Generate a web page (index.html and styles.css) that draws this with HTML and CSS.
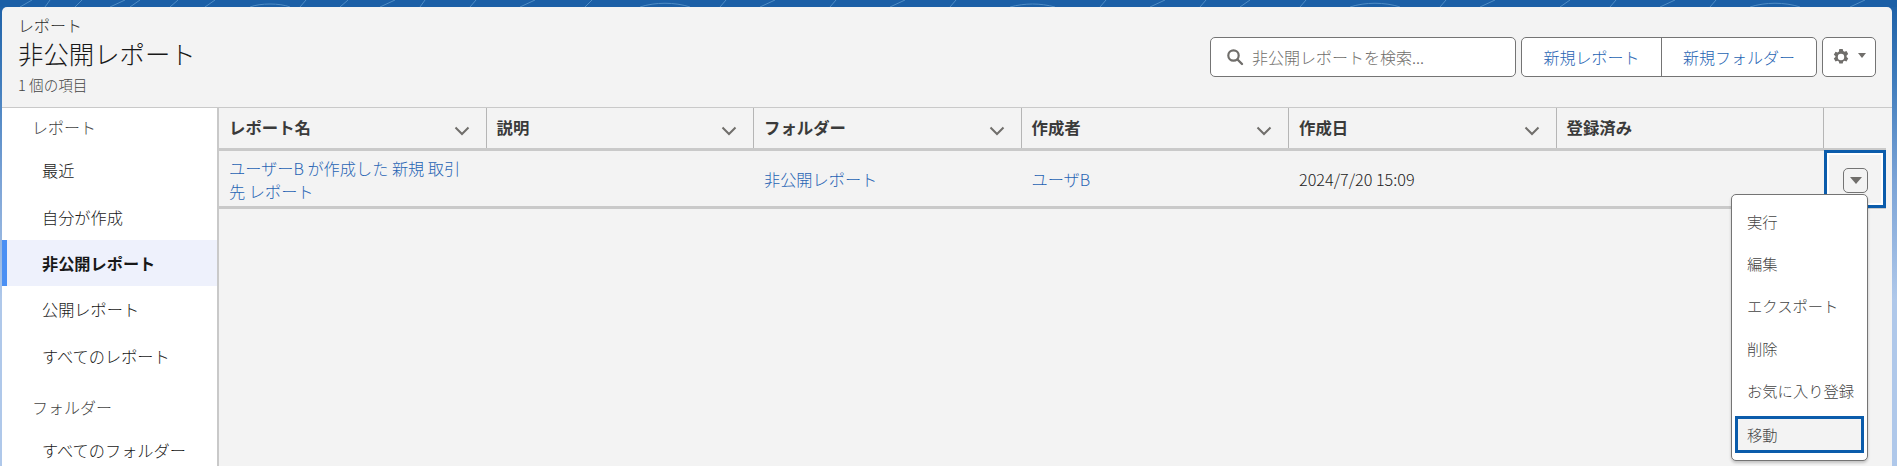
FILE: index.html
```html
<!DOCTYPE html>
<html lang="ja">
<head>
<meta charset="utf-8">
<title>非公開レポート</title>
<link rel="stylesheet" href="styles.css">
</head>
<body>
<div class="band">
<svg class="band-art" width="1897" height="7" viewBox="0 0 1897 7" aria-hidden="true">
<path d="M20 7L32 0M45 7L50 0M75 7L82 0M110 7L125 0M130 7L140 0M170 7L178 0M205 7L215 0M250 7C260 3 280 3 290 7M300 7L306 0M340 7L348 0M380 7L395 0M420 7L425 0M470 7L476 0M520 7L535 0M585 7L592 0M640 7C655 2 675 2 690 7M720 7L726 0M760 7L775 0M830 7L836 0M890 7L905 0M950 7L956 0M1010 7C1025 3 1040 3 1055 7M1100 7L1106 0M1150 7L1165 0M1200 7L1206 0M1240 7L1250 0M1300 7L1306 0M1350 7C1365 2 1385 2 1400 7M1440 7L1446 0M1480 7L1495 0M1560 7L1570 0M1610 7L1616 0M1660 7L1675 0M1710 7L1716 0M1750 7C1765 2 1785 2 1800 7M1850 7L1865 0" fill="none" stroke="#4f8cc5" stroke-width="1"/>
</svg>
</div>
<main class="panel">
  <header class="head">
    <div class="titles">
      <div class="crumb">レポート</div>
      <h1 class="title">非公開レポート</h1>
      <div class="count">1 個の項目</div>
    </div>
    <div class="actions">
      <div class="search">
        <svg class="search-ico" width="18" height="18" viewBox="0 0 18 18" aria-hidden="true"><circle cx="7.5" cy="7.5" r="5.2" fill="none" stroke="#706e6b" stroke-width="2.2"/><path d="M11.5 11.5L16 16" stroke="#706e6b" stroke-width="2.4" stroke-linecap="round"/></svg>
        <span>非公開レポートを検索...</span>
      </div>
      <div class="btn-group">
        <a class="btn btn-a">新規レポート</a>
        <a class="btn btn-b">新規フォルダー</a>
      </div>
      <div class="gear-btn">
        <svg width="18" height="18" viewBox="0 0 18 18" aria-hidden="true"><path fill="#706e6b" fill-rule="evenodd" d="M7.3 1h3.4l.5 2.1 1.3.7 2-.7 1.7 3-1.6 1.4v1.4l1.6 1.5-1.7 3-2-.7-1.3.7-.5 2.1H7.3l-.5-2.1-1.3-.7-2 .7-1.7-3 1.6-1.5V8.1L1.8 6.7l1.7-3 2 .7 1.3-.7zM9 5.8a3.2 3.2 0 1 0 0 6.4 3.2 3.2 0 0 0 0-6.4z"/></svg>
        <i class="tri tri-s"></i>
      </div>
    </div>
  </header>
  <div class="body">
    <nav class="side">
      <div class="side-h">レポート</div>
      <a class="side-i">最近</a>
      <a class="side-i">自分が作成</a>
      <a class="side-i on">非公開レポート</a>
      <a class="side-i">公開レポート</a>
      <a class="side-i">すべてのレポート</a>
      <div class="side-h side-h2">フォルダー</div>
      <a class="side-i">すべてのフォルダー</a>
    </nav>
    <section class="tbl">
      <div class="tr th">
        <div class="c"><b>レポート名</b><svg class="chev" width="16" height="10" viewBox="0 0 16 10" aria-hidden="true"><path d="M1.5 1.5L8 8l6.5-6.5" fill="none" stroke="#706e6b" stroke-width="2"/></svg></div>
        <div class="c"><b>説明</b><svg class="chev" width="16" height="10" viewBox="0 0 16 10" aria-hidden="true"><path d="M1.5 1.5L8 8l6.5-6.5" fill="none" stroke="#706e6b" stroke-width="2"/></svg></div>
        <div class="c"><b>フォルダー</b><svg class="chev" width="16" height="10" viewBox="0 0 16 10" aria-hidden="true"><path d="M1.5 1.5L8 8l6.5-6.5" fill="none" stroke="#706e6b" stroke-width="2"/></svg></div>
        <div class="c"><b>作成者</b><svg class="chev" width="16" height="10" viewBox="0 0 16 10" aria-hidden="true"><path d="M1.5 1.5L8 8l6.5-6.5" fill="none" stroke="#706e6b" stroke-width="2"/></svg></div>
        <div class="c"><b>作成日</b><svg class="chev" width="16" height="10" viewBox="0 0 16 10" aria-hidden="true"><path d="M1.5 1.5L8 8l6.5-6.5" fill="none" stroke="#706e6b" stroke-width="2"/></svg></div>
        <div class="c"><b>登録済み</b></div>
        <div class="c c-last"></div>
      </div>
      <div class="tr td">
        <div class="c"><a class="lnk">ユーザーB が作成した 新規 取引先 レポート</a></div>
        <div class="c"></div>
        <div class="c"><a class="lnk">非公開レポート</a></div>
        <div class="c"><a class="lnk">ユーザB</a></div>
        <div class="c">2024/7/20 15:09</div>
        <div class="c"></div>
        <div class="c c-last c-focus"><span class="row-btn"><i class="tri"></i></span></div>
      </div>
      <ul class="menu">
        <li>実行</li>
        <li>編集</li>
        <li>エクスポート</li>
        <li>削除</li>
        <li>お気に入り登録</li>
        <li class="focus">移動</li>
      </ul>
    </section>
  </div>
</main>
</body>
</html>
```
FILE: styles.css
```css
* { box-sizing: border-box; }
html, body { margin: 0; height: 466px; overflow: hidden; }
body {
  width: 1897px;
  background: linear-gradient(180deg, #1b5fa6 0, #3f7cbc 80px, #7ba3d6 180px, #afc8ea 300px);
  font-family: "Noto Sans CJK JP", "Noto Sans", sans-serif;
  font-size: 16.2px;
  font-weight: 300;
  color: #181818;
}
.band { height: 7px; background: #1b5fa6; }
.band-art { display: block; }
.panel {
  margin: 0 5px 0 2px;
  height: 459px;
  background: #f3f3f3;
  border-radius: 5px 5px 0 0;
  display: flex;
  flex-direction: column;
  overflow: hidden;
}
.head {
  height: 100px;
  flex: none;
  display: flex;
  justify-content: space-between;
  padding: 8px 16px 0 16px;
}
.crumb { font-size: 16px; line-height: 20px; color: #2e2e2e; }
.title { margin: 1px 0 0; font-size: 25.4px; line-height: 34px; font-weight: 300; color: #181818; }
.count { margin-top: 5px; font-size: 14.6px; line-height: 20px; color: #444; }
.actions { display: flex; gap: 5px; padding-top: 22px; align-items: flex-start; }
.search {
  width: 306px; height: 40px;
  background: #fff;
  border: 1px solid #747474;
  border-radius: 5px;
  display: flex; align-items: center;
  padding-left: 15px; gap: 8px;
  font-size: 16px; color: #706e6b;
}
.search-ico { flex: none; }
.btn-group {
  width: 296px; height: 40px;
  background: #fff;
  border: 1px solid #747474;
  border-radius: 5px;
  display: flex;
}
.btn {
  display: flex; align-items: center; justify-content: center;
  font-size: 16px; color: #2764b3;
}
.btn-a { width: 140px; border-right: 1px solid #747474; }
.btn-b { flex: 1; }
.gear-btn {
  width: 54px; height: 40px;
  background: #fff;
  border: 1px solid #747474;
  border-radius: 5px;
  display: flex; align-items: center; justify-content: center; gap: 8px;
}
.tri {
  display: block; width: 0; height: 0;
  border-left: 6px solid transparent;
  border-right: 6px solid transparent;
  border-top: 7px solid #706e6b;
}
.tri-s { border-left-width: 4px; border-right-width: 4px; border-top-width: 5px; margin-top: -3px; }
.body { flex: 1; display: flex; border-top: 1px solid #c9c9c9; min-height: 0; }
.side {
  width: 217px; flex: none;
  background: #fff;
  border-right: 2px solid #c9c9c9;
  display: flex; flex-direction: column;
}
.side-h { height: 39px; flex: none; padding: 8px 0 0 30px; line-height: 22px; font-size: 16px; color: #444; }
.side-h2 { margin-top: 9px; }
.side-i {
  height: 46.4px; flex: none;
  display: flex; align-items: center;
  padding-left: 40px;
  color: #181818;
}
.side-i.on {
  background: #eef1fc;
  font-weight: 700;
  box-shadow: inset 5px 0 0 #4b90f4;
}
.tbl { flex: 1; position: relative; min-width: 0; }
.tr { display: grid; grid-template-columns: repeat(6, 267.5px) 62px; width: 1667px; }
.th { height: 43px; border-bottom: 3px solid #c9c9c9; }
.th .c {
  border-right: 1px solid #b5b5b5;
  height: 40px;
  display: flex; justify-content: space-between; align-items: flex-start;
  padding: 7px 16px 0 10px;
  line-height: 24px;
}
.th .c b { font-size: 16.4px; color: #3a3a3a; font-weight: 700; }
.th .c-last { border-right: 0; }
.chev { margin-top: 11px; }
.td { height: 58px; border-bottom: 3px solid #c9c9c9; }
.td .c {
  display: flex; align-items: center;
  padding: 0 10px;
  font-size: 16.2px; line-height: 23px; color: #222;
}
.td .c:first-child { padding-right: 18px; }
.lnk { color: #2764b3; width: 100%; display: block; }
.c-last { padding: 0; }
.td .c-focus {
  border: 3px solid #0b5cab;
  box-shadow: inset 0 0 0 2px #fff;
  margin-top: -1px;
  height: 58px;
  justify-content: flex-end;
  align-items: flex-start;
  padding: 15px 15px 0 0;
}
.row-btn {
  width: 25px; height: 25px;
  background: #f3f3f3;
  border: 1px solid #747474;
  border-radius: 5px;
  display: flex; align-items: center; justify-content: center;
}
.menu {
  position: absolute;
  left: 1512px; top: 86px;
  width: 137px; height: 267px;
  margin: 0; padding: 4.5px 3px 0;
  list-style: none;
  background: #fff;
  border: 1px solid #747474;
  border-radius: 5px;
  box-shadow: 0 2px 3px rgba(0,0,0,.2);
  font-size: 15.3px;
  color: #444;
}
.menu li {
  height: 42.3px;
  display: flex; align-items: center;
  padding-left: 12px;
}
.menu li.focus {
  height: 37px;
  margin-top: 5px;
  border: 3px solid #0b5cab;
  background: #f3f3f3;
  padding-left: 9px;
}
```
